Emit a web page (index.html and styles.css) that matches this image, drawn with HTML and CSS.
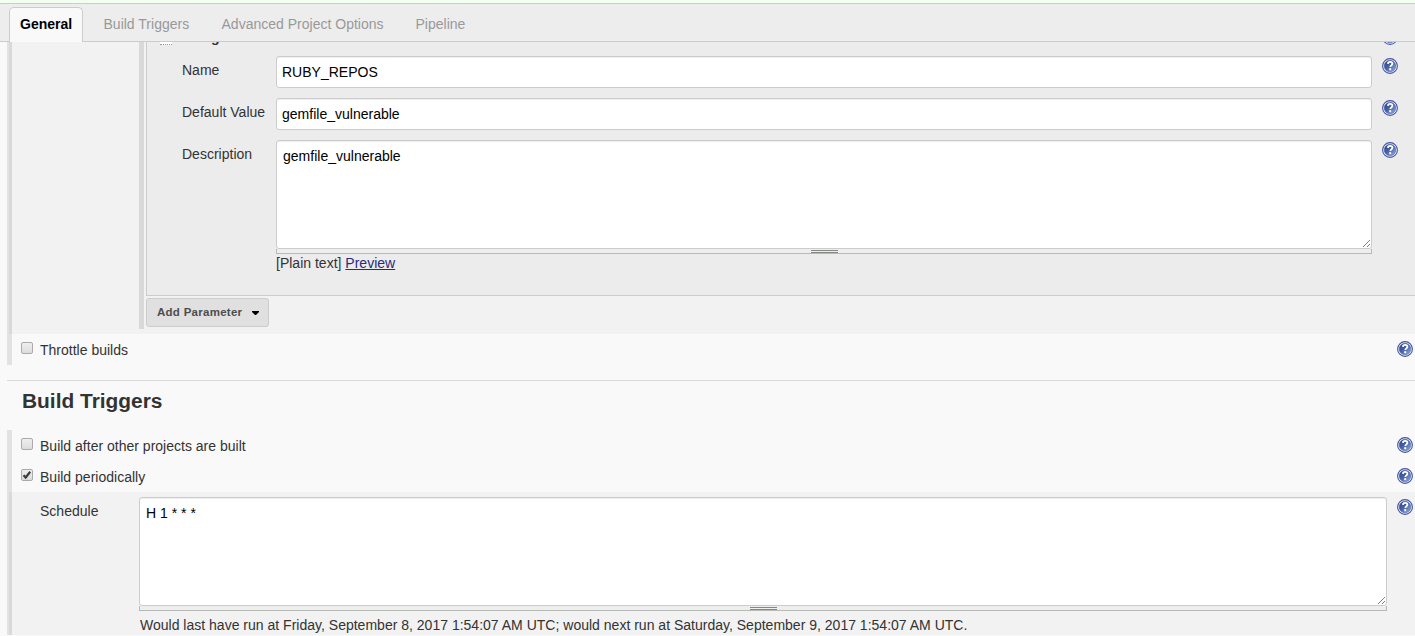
FILE: index.html
```html
<!DOCTYPE html>
<html lang="en">
<head>
<meta charset="utf-8">
<title>Project configuration</title>
<link rel="stylesheet" href="styles.css">
</head>
<body>
<svg class="defs" width="0" height="0" aria-hidden="true">
  <defs>
    <linearGradient id="blue" x1="0" y1="0" x2="1" y2="1"><stop offset="0" stop-color="#2f4284"/><stop offset=".45" stop-color="#4661a3"/><stop offset="1" stop-color="#94b0e0"/></linearGradient>
    <symbol id="help" viewBox="0 0 16 16">
      <circle cx="8" cy="8" r="7.4" fill="#f4f6fc" stroke="#4354a0" stroke-width="1.1"/>
      <circle cx="8" cy="8" r="5.8" fill="url(#blue)" stroke="#4558a0" stroke-width=".5"/>
      <path d="M5.9 5.9C6 4.4 7 3.9 8.1 3.9c1.3 0 2.3.8 2.3 1.9 0 1.5-2.1 1.6-2.1 3.3" fill="none" stroke="#fff" stroke-width="1.8"/>
      <path d="M7.2 10.2h2v2h-2z" fill="#fff"/>
    </symbol>
    <symbol id="grip" viewBox="0 0 9 9"><path d="M1 8l7-7M5 8l3-3" stroke="#555" stroke-width="1" stroke-dasharray="1.1 .3"/></symbol>
  </defs>
</svg>
<div class="strip"></div>
<nav class="tabs">
  <a class="tab active">General</a><a class="tab t2">Build Triggers</a><a class="tab t3">Advanced Project Options</a><a class="tab t4">Pipeline</a>
</nav>
<main class="content">
  <section class="group general">
    <div class="shade">
      <div class="nested">
        <div class="panel">
          <div class="ptitle"><i class="drag"></i><b>String Parameter</b><svg class="help"><use href="#help"/></svg></div>
          <div class="field"><label>Name</label><input class="box" value="RUBY_REPOS"><svg class="help"><use href="#help"/></svg></div>
          <div class="field"><label>Default Value</label><input class="box" value="gemfile_vulnerable"><svg class="help"><use href="#help"/></svg></div>
          <div class="field"><label>Description</label>
            <div class="area"><textarea class="box">gemfile_vulnerable</textarea><svg class="grip"><use href="#grip"/></svg><div class="handle"><i></i></div>
              <div class="note">[Plain text] <a class="link">Preview</a></div></div>
            <svg class="help"><use href="#help"/></svg></div>
        </div>
        <button class="add">Add Parameter<svg width="7" height="4" viewBox="0 0 7 4"><path d="M0 0h7v1L4 4H3L0 1z"/></svg></button>
      </div>
    </div>
    <div class="row"><i class="check"></i><span>Throttle builds</span><svg class="help"><use href="#help"/></svg></div>
  </section>
  <h2>Build Triggers</h2>
  <section class="group">
    <div class="row"><i class="check"></i><span>Build after other projects are built</span><svg class="help"><use href="#help"/></svg></div>
    <div class="row"><i class="check"><svg viewBox="0 0 10 10"><path d="M1.5 5.2l2.2 2.3L8.2 1.8" fill="none" stroke="#3c3c3c" stroke-width="2.2"/></svg></i><span>Build periodically</span><svg class="help"><use href="#help"/></svg></div>
    <div class="shade schedule">
      <label>Schedule</label>
      <div class="area"><textarea class="box">H 1 * * *</textarea><svg class="grip"><use href="#grip"/></svg><div class="handle"><i></i></div>
        <div class="note">Would last have run at Friday, September 8, 2017 1:54:07 AM UTC; would next run at Saturday, September 9, 2017 1:54:07 AM UTC.</div></div>
      <svg class="help"><use href="#help"/></svg>
    </div>
  </section>
</main>
</body>
</html>
```
FILE: styles.css
```css
* { box-sizing: border-box; }
html, body { height: 636px; overflow: hidden; }
body {
  margin: 0;
  display: flex;
  flex-direction: column;
  background: #f9f9f9;
  color: #333;
  font: 14.03px/18px "Liberation Sans", Arial, sans-serif;
}
.defs { position: absolute; }
.strip { height: 4px; flex: none; background: #f2fff0; border-bottom: 1px solid #ccc; }
.tabs {
  height: 38px;
  flex: none;
  display: flex;
  padding: 3px 0 0 9px;
  background: #ededed;
  border-bottom: 1px solid #ccc;
}
.tab { color: #999; line-height: 34px; white-space: nowrap; }
.tab.active {
  width: 74px;
  height: 35px;
  padding-left: 10px;
  color: #000;
  font-weight: bold;
  background: #f9f9f9;
  border: 1px solid #ccc;
  border-bottom: 0;
  border-radius: 5px 5px 0 0;
  line-height: 32px;
}
.t2 { margin-left: 20.5px; width: 118px; }
.t3 { width: 194px; }
.content { flex: 1; min-height: 0; overflow: hidden; padding-left: 7px; }
.group { border-left: 2px solid #e2e2e2; }
.shade { background: #f2f2f2; border-left: 3px solid #d9d9d9; }
.general .shade { height: 292px; padding-left: 127px; }
.nested { height: 287px; border-left: 5px solid #d9d9d9; padding-left: 2px; }
.panel {
  height: 254px;
  padding-left: 35px;
  background: #ececec;
  border-left: 1px solid #ccc;
  border-bottom: 1px solid #ccc;
}
.ptitle { height: 14px; display: flex; align-items: flex-start; }
.drag { width: 12px; height: 3px; margin: 0 7px 0 -22px; background: #fff; border-bottom: 1px dotted #999; }
.ptitle b { margin-top: -14px; }
.ptitle .help { margin: -13px 17px 0 auto; }
.field { display: grid; grid-template-columns: 94px 1fr 16px; column-gap: 0; margin-bottom: 10px; padding-right: 17px; }
.field label { padding-top: 5px; }
.field > .box, .field > .area { margin-right: 10px; }
.box {
  display: block;
  width: auto;
  min-width: 0;
  height: 32px;
  padding: 0 5px;
  border: 1px solid #ccc;
  border-radius: 3px;
  background: #fff;
  box-shadow: inset 0 1px 1px #eee;
  color: #000;
  font: inherit;
  outline: 0;
}
.help { width: 16px; height: 16px; display: block; flex: none; }
.field .help { margin-top: 2px; }
.area { position: relative; }
textarea.box { width: 100%; height: 109px; padding: 6px; resize: none; overflow: hidden; }
.grip { position: absolute; right: 1px; top: 99px; width: 9px; height: 9px; }
.handle { height: 5px; padding-top: 1px; border: 1px solid #b5bab5; border-top: 0; background: #eee; }
.handle i { display: block; width: 27px; height: 3px; margin: 0 auto; border: solid #838a83; border-width: 1px 0; }
.note { white-space: nowrap; }
.link { color: #2a2a80; text-decoration: underline; }
.add {
  display: flex;
  align-items: center;
  width: 123px;
  height: 29px;
  margin-top: 2px;
  padding: 0 9px 1px 10px;
  border: 1px solid #ccc;
  border-radius: 3px;
  background: #e0e0e0;
  color: #4d4d4d;
  font: bold 11.5px "Liberation Sans", Arial, sans-serif;
  letter-spacing: .27px;
}
.add svg { margin: 2px 0 0 auto; }
.row { height: 31px; display: flex; border-left: 3px solid #e2e2e2; padding: 7px 2px 0 9px; }
.row span { margin-left: 7px; }
.row .help { margin-left: auto; }
.check {
  width: 12px;
  height: 12px;
  margin-top: 1px;
  border: 1px solid #aaa;
  border-radius: 2px;
  background: linear-gradient(#eee, #dcdcdc);
}
.check svg { display: block; width: 10px; height: 10px; }
h2 {
  height: 50px;
  margin: 15px 0 0;
  padding: 8px 0 0 15px;
  border-top: 1px solid #d9d9d9;
  font-size: 20.9px;
  line-height: 24px;
}
.schedule { height: 143px; display: grid; grid-template-columns: 99px 1fr 16px; padding: 5px 2px 0 28px; }
.schedule label { padding-top: 5px; }
.schedule .area { margin-right: 10px; }
.schedule .note { margin-top: 5px; padding-left: 1px; }
.schedule .help { margin-top: 2px; }
```
